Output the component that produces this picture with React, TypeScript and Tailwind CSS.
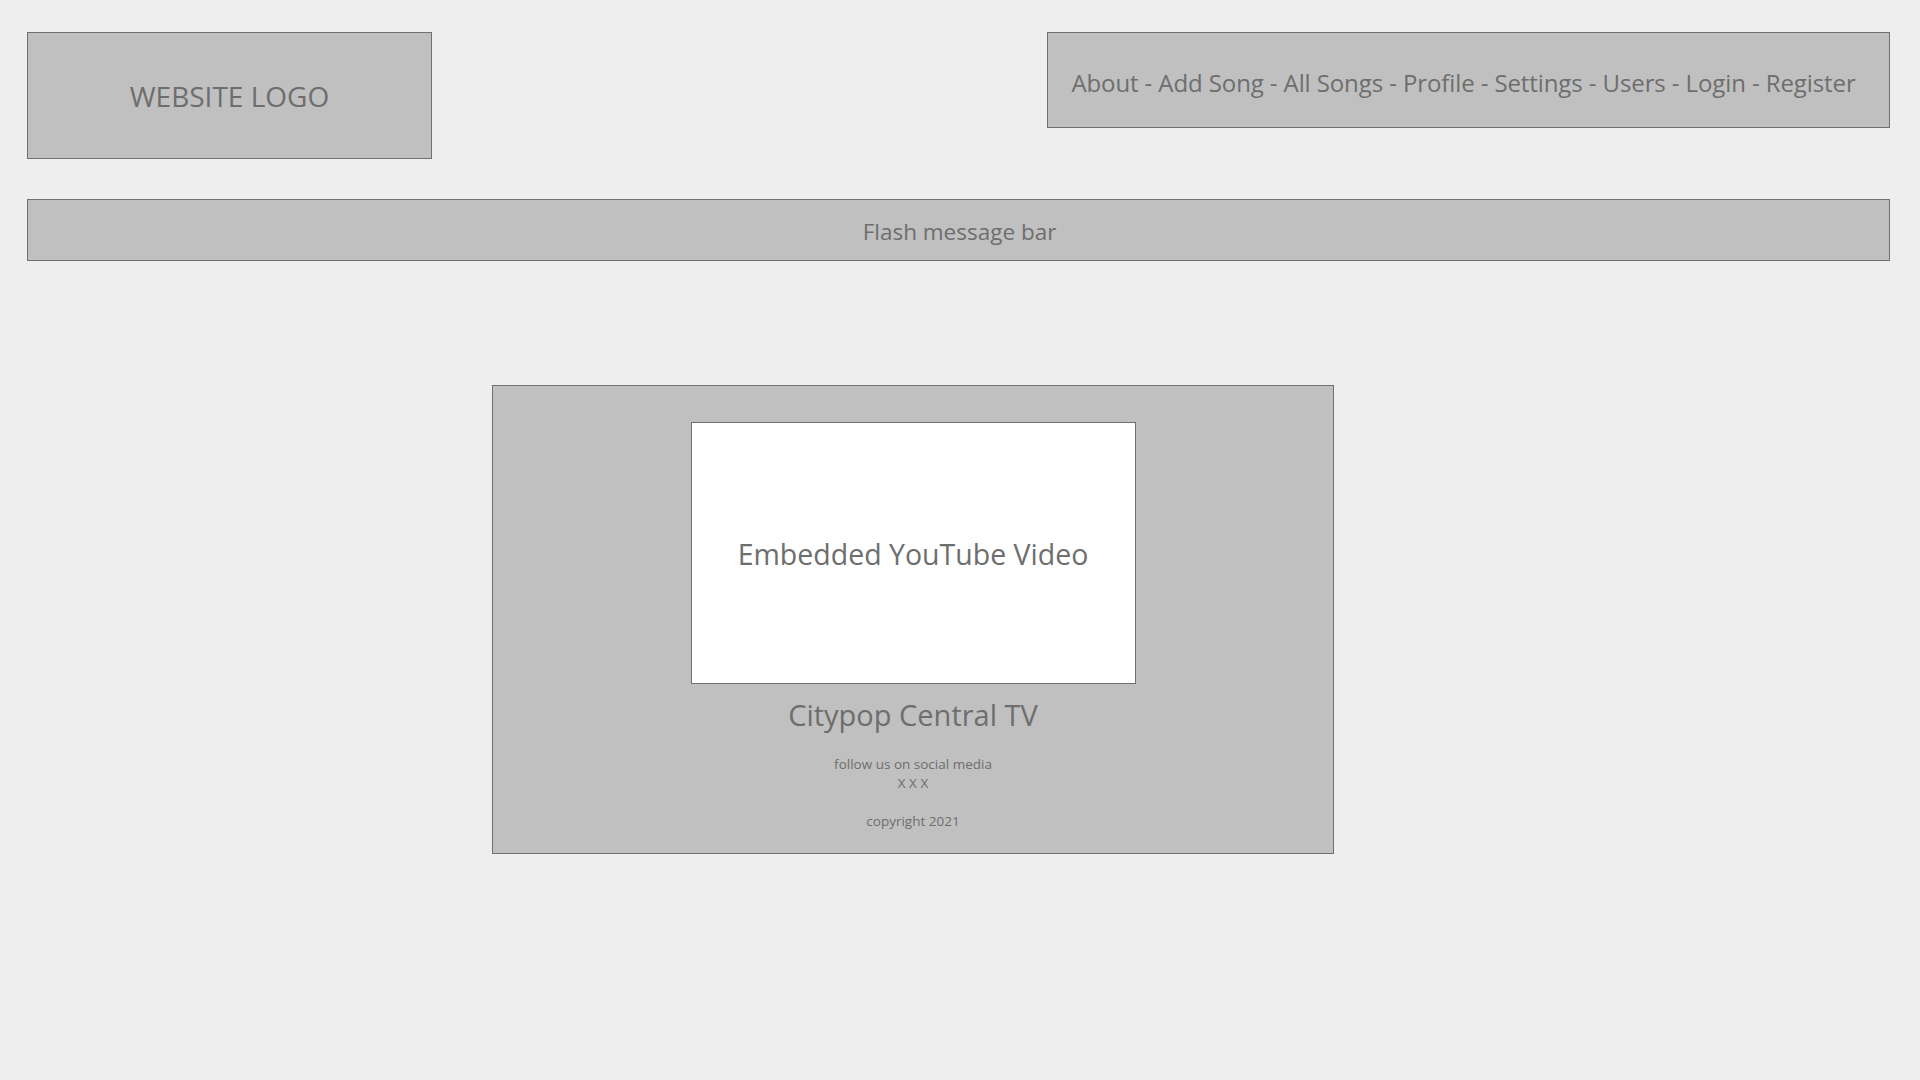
const font = { fontFamily: '"Open Sans", "Noto Sans", Arial, sans-serif' };

const navItems = ['About', 'Add Song', 'All Songs', 'Profile', 'Settings', 'Users', 'Login', 'Register'];

export default function App() {
    return (
        <div className="min-h-[1080px] w-full bg-[#eeeeee] text-[#6e6e6e]" style={font}>
            {/* header */}
            <div className="flex items-start justify-between pl-[27px] pr-[30px] pt-[32px]">
                <div className="flex h-[127px] w-[405px] items-center justify-center border border-[#707070] bg-[#c0c0c0] pt-[1px]">
                    <span className="text-[28px]">WEBSITE LOGO</span>
                </div>
                <nav className="flex h-[96px] w-[843px] items-center justify-center border border-[#707070] bg-[#c0c0c0] pr-[10px] pt-[6px]">
                    <span className="text-[24px] tracking-[-0.1px]">{navItems.join(' - ')}</span>
                </nav>
            </div>

            {/* flash bar */}
            <div className="mt-[40px] ml-[27px] mr-[30px] flex h-[62px] items-center justify-center border border-[#707070] bg-[#c0c0c0] pt-[4px]">
                <span className="pl-[2px] text-[22.5px]">Flash message bar</span>
            </div>

            {/* main */}
            <div className="mt-[124px] ml-[492px] flex h-[469px] w-[842px] flex-col items-center border border-[#707070] bg-[#c0c0c0] pt-[36px]">
                <div className="flex h-[262px] w-[445px] items-center justify-center border border-[#707070] bg-white pt-[2px]">
                    <span className="text-[28.5px]">Embedded YouTube Video</span>
                </div>
                <h1 className="mt-[11px] text-[29px] leading-[40px]">Citypop Central TV</h1>
                <p className="mt-[20px] text-[13.5px] leading-[19px]">follow us on social media</p>
                <p className="text-[13.5px] leading-[19px]">X X X</p>
                <p className="mt-[19px] text-[13.5px] leading-[19px]">copyright 2021</p>
            </div>
        </div>
    );
}
